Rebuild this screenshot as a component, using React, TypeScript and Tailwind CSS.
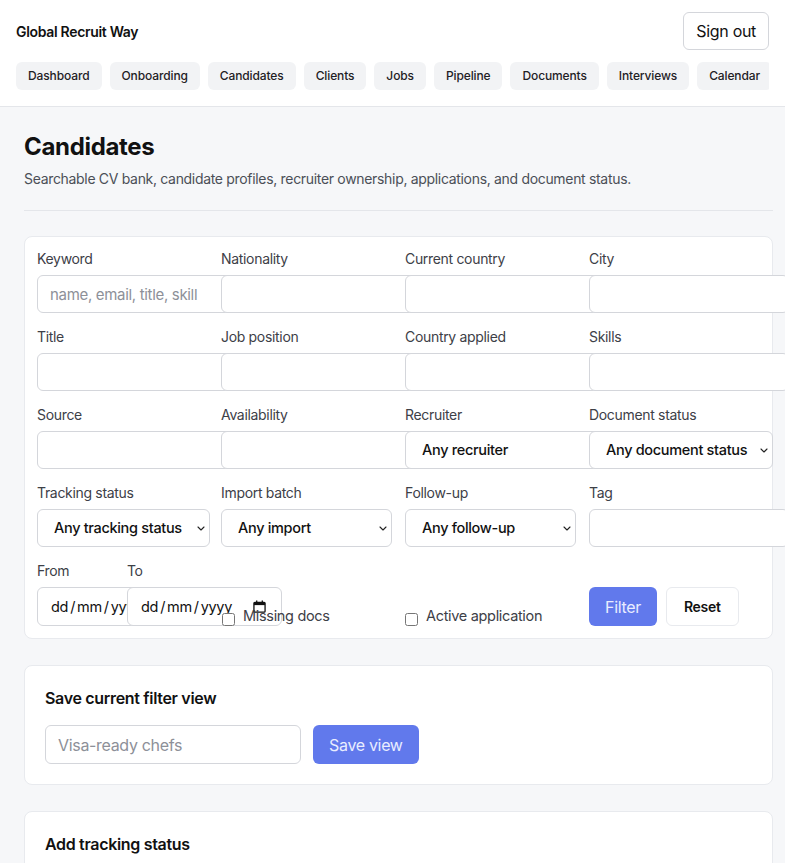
import React from "react";

const navItems = [
  "Dashboard",
  "Onboarding",
  "Candidates",
  "Clients",
  "Jobs",
  "Pipeline",
  "Documents",
  "Interviews",
  "Calendar",
];

function Label({ children }: { children: React.ReactNode }) {
  return (
    <label className="block text-[14px] leading-5 text-[#3d4047] mb-1.5 whitespace-nowrap">
      {children}
    </label>
  );
}

function TextField({ label, placeholder }: { label: string; placeholder?: string }) {
  return (
    <div className="flex flex-col">
      <Label>{label}</Label>
      <input
        type="text"
        placeholder={placeholder}
        className="w-[200px] h-[38px] bg-white border border-[#d4d6db] rounded-md pl-3 text-[15px] text-[#111] placeholder:text-[#8d9098] outline-none"
      />
    </div>
  );
}

function SelectField({
  label,
  value,
  width,
}: {
  label: string;
  value: string;
  width: string;
}) {
  return (
    <div className="flex flex-col">
      <Label>{label}</Label>
      <div className={`relative ${width}`}>
        <select
          defaultValue={value}
          className="appearance-none w-full h-[38px] bg-white border border-[#d4d6db] rounded-md pl-4 pr-4 text-[14.5px] font-medium text-[#111] outline-none">
          <option>{value}</option>
        </select>
        <svg
          viewBox="0 0 8 5"
          className="absolute right-[5px] top-[17px] w-[8px] h-[5px] pointer-events-none"
          fill="none">
          <path d="M1 1l3 3 3-3" stroke="#222" strokeWidth="1.1" strokeLinecap="round" strokeLinejoin="round" />
        </svg>
      </div>
    </div>
  );
}

// chrome renders the date field with the browser locale, so draw the en-GB one
function DateField({ label, wrap }: { label: string; wrap?: boolean }) {
  return (
    <div className={`flex flex-col ${wrap ? "w-[90px]" : ""}`}>
      <Label>{label}</Label>
      <div className="w-[155px] h-[39px] shrink-0 bg-white border border-[#d4d6db] rounded-md pl-[13px] pr-[15px] flex items-center text-[14.5px] text-[#111] whitespace-nowrap">
        <span>dd</span>
        <span className="mx-[2px]">/</span>
        <span>mm</span>
        <span className="mx-[2px]">/</span>
        <span>yyyy</span>
        <svg viewBox="0 0 14 14" className="ml-auto w-[13px] h-[13px]" fill="none">
          <rect x="1" y="2.5" width="12" height="10.5" rx="1" stroke="#111" strokeWidth="1.4" />
          <rect x="1" y="2.5" width="12" height="3" fill="#111" />
          <rect x="3.3" y="0.5" width="1.4" height="2.5" fill="#111" />
          <rect x="9.3" y="0.5" width="1.4" height="2.5" fill="#111" />
        </svg>
      </div>
    </div>
  );
}

export default function App() {
  return (
    <div className="min-h-screen bg-[#f6f7f9] font-['Inter','Noto_Sans',sans-serif] tracking-[-0.02em] text-[#111] overflow-hidden">
      {/* Top bar */}
      <header className="bg-white border-b border-[#e4e6ea] px-4 pt-3 pb-4">
        <div className="flex items-center justify-between">
          <div className="text-[14px] font-semibold text-[#111]">Global Recruit Way</div>
          <button className="h-[38px] px-3 border border-[#d4d6db] rounded-md text-[16px] text-[#111] bg-white">
            Sign out
          </button>
        </div>
        <nav className="mt-3 flex gap-2 overflow-hidden">
          {navItems.map((item) => (
            <a
              key={item}
              className="shrink-0 px-3 py-1.5 text-[12px] leading-4 font-medium tracking-[-0.01em] text-[#1f2125] bg-[#f2f3f5] rounded-md">
              {item}
            </a>
          ))}
        </nav>
      </header>

      <main className="pl-6 pr-3 pt-6">
        <div className="border-b border-[#e4e6ea] pb-[21px]">
          <h1 className="text-[24px] leading-8 font-bold text-[#111]">Candidates</h1>
          <p className="mt-1.5 text-[14px] leading-5 text-[#4b4f57]">
            Searchable CV bank, candidate profiles, recruiter ownership, applications, and document status.
          </p>
        </div>

        <div className="mt-[25px] flex flex-col gap-[26px]">
          {/* Filters */}
          <form className="bg-white border border-[#e8eaee] rounded-lg p-3">
            <div className="grid grid-cols-[repeat(4,184px)] gap-y-[14px]">
              <TextField label="Keyword" placeholder="name, email, title, skill" />
              <TextField label="Nationality" />
              <TextField label="Current country" />
              <TextField label="City" />

              <TextField label="Title" />
              <TextField label="Job position" />
              <TextField label="Country applied" />
              <TextField label="Skills" />

              <TextField label="Source" />
              <TextField label="Availability" />
              <SelectField label="Recruiter" value="Any recruiter" width="w-[200px]" />
              <SelectField label="Document status" value="Any document status" width="w-[184px]" />

              <SelectField label="Tracking status" value="Any tracking status" width="w-[173px]" />
              <SelectField label="Import batch" value="Any import" width="w-[171px]" />
              <SelectField label="Follow-up" value="Any follow-up" width="w-[171px]" />
              <TextField label="Tag" />

              <div className="flex">
                <DateField label="From" wrap />
                <DateField label="To" />
              </div>

              <label className="self-end flex items-center gap-2 pl-px h-5 text-[14.5px] text-[#3d4047] whitespace-nowrap">
                <input type="checkbox" className="w-[13px] h-[13px] mt-1.5" />
                Missing docs
              </label>

              <label className="self-end flex items-center gap-2 h-5 text-[14.5px] text-[#3d4047] whitespace-nowrap">
                <input type="checkbox" className="w-[13px] h-[13px] mt-1.5" />
                Active application
              </label>

              <div className="self-end flex gap-[9px]">
                <button
                  type="button"
                  className="h-[39px] px-4 rounded-md bg-[#6179ec] text-[16px] text-[#e9edff]">
                  Filter
                </button>
                <button
                  type="button"
                  className="h-[39px] px-[17px] rounded-md bg-white border border-[#e8eaee] text-[14px] font-semibold text-[#111]">
                  Reset
                </button>
              </div>
            </div>
          </form>

          {/* Saved views */}
          <section className="bg-white border border-[#e8eaee] rounded-lg p-5">
            <h2 className="text-[16px] leading-6 font-semibold text-[#111]">Save current filter view</h2>
            <div className="mt-[15px] flex gap-3">
              <input
                type="text"
                placeholder="Visa-ready chefs"
                className="w-[256px] h-[39px] bg-white border border-[#d4d6db] rounded-md pl-3 text-[16px] placeholder:text-[#8d9098] outline-none"
              />
              <button className="h-[39px] px-4 rounded-md bg-[#6179ec] text-[16px] text-[#e9edff]">
                Save view
              </button>
            </div>
          </section>

          {/* Tracking status */}
          <section className="bg-white border border-[#e8eaee] rounded-lg p-5">
            <h2 className="text-[16px] leading-6 font-semibold text-[#111]">Add tracking status</h2>
            <div className="mt-4 flex gap-3">
              <input
                type="text"
                className="w-[256px] h-[39px] bg-white border border-[#d4d6db] rounded-md pl-3 text-[16px] outline-none"
              />
            </div>
          </section>
        </div>
      </main>
    </div>
  );
}
